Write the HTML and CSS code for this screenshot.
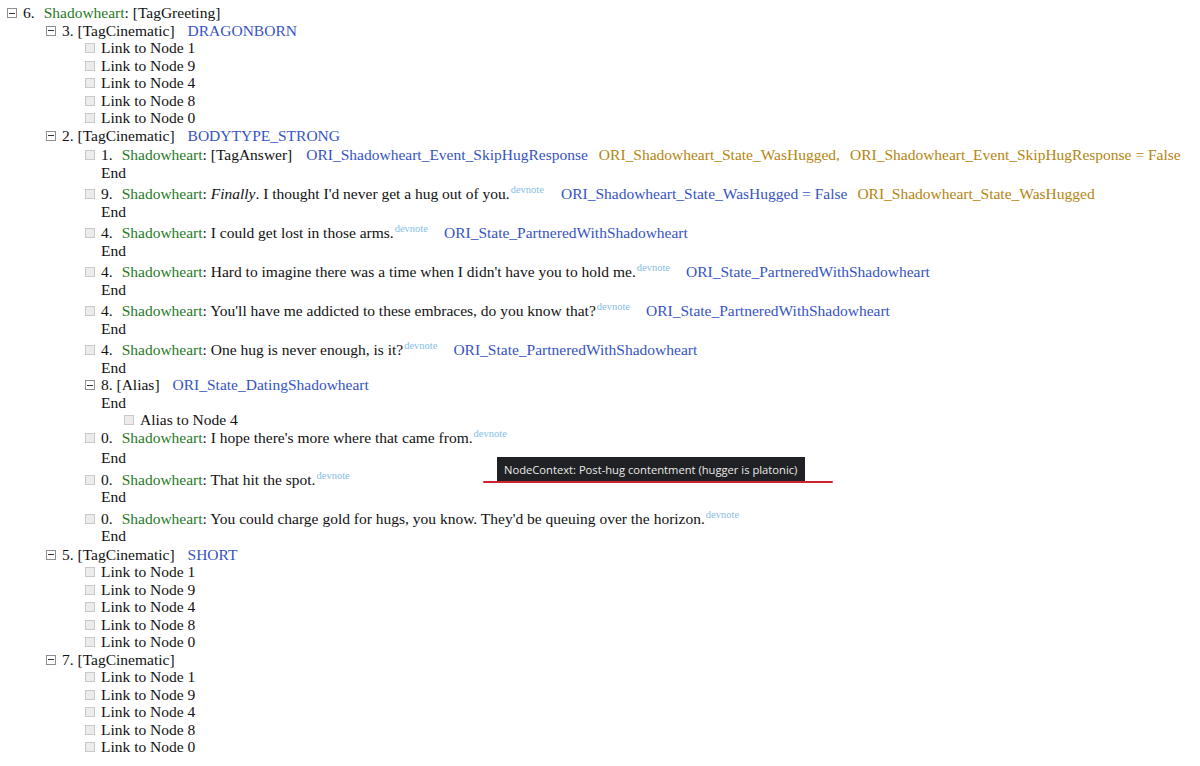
FILE: index.html
```html
<!DOCTYPE html>
<html>
<head>
<meta charset="utf-8">
<link rel="stylesheet" href="styles.css">
</head>
<body>
<div class="tree">
  <div class="node">
    <div class="row"><span class="ic minus"></span><div class="ct"><span class="num sp">6.</span><span class="spk">Shadowheart</span>: [TagGreeting]</div></div>
    <div class="children">

      <div class="node">
        <div class="row"><span class="ic minus"></span><div class="ct"><span class="num">3.</span> [TagCinematic]<span class="cb cond">DRAGONBORN</span></div></div>
        <div class="children">
          <div class="row"><span class="ic box"></span><div class="ct">Link to Node 1</div></div>
          <div class="row"><span class="ic box"></span><div class="ct">Link to Node 9</div></div>
          <div class="row"><span class="ic box"></span><div class="ct">Link to Node 4</div></div>
          <div class="row"><span class="ic box"></span><div class="ct">Link to Node 8</div></div>
          <div class="row"><span class="ic box"></span><div class="ct">Link to Node 0</div></div>
        </div>
      </div>

      <div class="node">
        <div class="row"><span class="ic minus"></span><div class="ct"><span class="num">2.</span> [TagCinematic]<span class="cb cond">BODYTYPE_STRONG</span></div></div>
        <div class="children first-gap">
          <div class="row dlg"><span class="ic box"></span><div class="ct"><div><span class="num sp">1.</span><span class="spk">Shadowheart</span>: [TagAnswer]<span class="cb cond w14">ORI_Shadowheart_Event_SkipHugResponse</span><span class="cg cond w11">ORI_Shadowheart_State_WasHugged,</span><span class="cg cond w10">ORI_Shadowheart_Event_SkipHugResponse = False</span></div><div>End</div></div></div>
          <div class="row dlg"><span class="ic box"></span><div class="ct"><div><span class="num sp">9.</span><span class="spk">Shadowheart</span>: <i>Finally</i>. I thought I'd never get a hug out of you.<sup class="dn">devnote</sup><span class="cb cond w17">ORI_Shadowheart_State_WasHugged = False</span><span class="cg cond w10">ORI_Shadowheart_State_WasHugged</span></div><div>End</div></div></div>
          <div class="row dlg"><span class="ic box"></span><div class="ct"><div><span class="num sp">4.</span><span class="spk">Shadowheart</span>: I could get lost in those arms.<sup class="dn">devnote</sup><span class="cb cond w16">ORI_State_PartneredWithShadowheart</span></div><div>End</div></div></div>
          <div class="row dlg"><span class="ic box"></span><div class="ct"><div><span class="num sp">4.</span><span class="spk">Shadowheart</span>: Hard to imagine there was a time when I didn't have you to hold me.<sup class="dn">devnote</sup><span class="cb cond w16">ORI_State_PartneredWithShadowheart</span></div><div>End</div></div></div>
          <div class="row dlg"><span class="ic box"></span><div class="ct"><div><span class="num sp">4.</span><span class="spk">Shadowheart</span>: You'll have me addicted to these embraces, do you know that?<sup class="dn">devnote</sup><span class="cb cond w16">ORI_State_PartneredWithShadowheart</span></div><div>End</div></div></div>
          <div class="row dlg tight"><span class="ic box"></span><div class="ct"><div><span class="num sp">4.</span><span class="spk">Shadowheart</span>: One hug is never enough, is it?<sup class="dn">devnote</sup><span class="cb cond w16">ORI_State_PartneredWithShadowheart</span></div><div>End</div></div></div>
          <div class="node">
            <div class="row"><span class="ic minus"></span><div class="ct"><div><span class="num">8.</span> [Alias]<span class="cb cond">ORI_State_DatingShadowheart</span></div><div>End</div></div></div>
            <div class="children">
              <div class="row"><span class="ic box"></span><div class="ct">Alias to Node 4</div></div>
            </div>
          </div>
          <div class="row dlg"><span class="ic box"></span><div class="ct"><div class="hovered"><span class="num sp">0.</span><span class="spk">Shadowheart</span>: I hope there's more where that came from.<sup class="dn">devnote</sup></div><div>End</div></div></div>
          <div class="row dlg"><span class="ic box"></span><div class="ct"><div><span class="num sp">0.</span><span class="spk">Shadowheart</span>: That hit the spot.<sup class="dn">devnote</sup></div><div>End</div></div></div>
          <div class="row dlg last"><span class="ic box"></span><div class="ct"><div><span class="num sp">0.</span><span class="spk">Shadowheart</span>: You could charge gold for hugs, you know. They'd be queuing over the horizon.<sup class="dn">devnote</sup></div><div>End</div></div></div>
        </div>
      </div>

      <div class="node">
        <div class="row"><span class="ic minus"></span><div class="ct"><span class="num">5.</span> [TagCinematic]<span class="cb cond">SHORT</span></div></div>
        <div class="children">
          <div class="row"><span class="ic box"></span><div class="ct">Link to Node 1</div></div>
          <div class="row"><span class="ic box"></span><div class="ct">Link to Node 9</div></div>
          <div class="row"><span class="ic box"></span><div class="ct">Link to Node 4</div></div>
          <div class="row"><span class="ic box"></span><div class="ct">Link to Node 8</div></div>
          <div class="row"><span class="ic box"></span><div class="ct">Link to Node 0</div></div>
        </div>
      </div>

      <div class="node">
        <div class="row"><span class="ic minus"></span><div class="ct"><span class="num">7.</span> [TagCinematic]</div></div>
        <div class="children">
          <div class="row"><span class="ic box"></span><div class="ct">Link to Node 1</div></div>
          <div class="row"><span class="ic box"></span><div class="ct">Link to Node 9</div></div>
          <div class="row"><span class="ic box"></span><div class="ct">Link to Node 4</div></div>
          <div class="row"><span class="ic box"></span><div class="ct">Link to Node 8</div></div>
          <div class="row"><span class="ic box"></span><div class="ct">Link to Node 0</div></div>
        </div>
      </div>

    </div>
  </div>
</div>
<div class="tooltip">NodeContext: Post-hug contentment (hugger is platonic)</div>
<div class="redline"></div>
</body>
</html>
```

FILE: styles.css
```css
html, body {
  margin: 0;
  padding: 0;
  background: #fff;
}
body {
  position: relative;
  font-family: "Liberation Serif", "Times New Roman", serif;
  font-size: 15.5px;
  line-height: 17.5px;
  color: #111;
  width: 1200px;
  height: 766px;
  overflow: hidden;
}
.tree {
  padding: 4px 0 0 7px;
}
.row {
  display: flex;
  align-items: flex-start;
  white-space: nowrap;
}
.ic {
  flex: none;
  width: 10px;
  height: 10px;
  margin-top: 4px;
  margin-right: 6px;
  box-sizing: border-box;
  position: relative;
}
.minus {
  width: 10px;
  height: 10px;
  border: 1px solid #8e8e8e;
  background: #fff;
}
.minus::after {
  content: "";
  position: absolute;
  left: 1px;
  right: 1px;
  top: 3.5px;
  height: 1px;
  background: #333;
}
.box {
  border: 1px solid #c9c9c9;
  background: #ececec;
}
.children {
  padding-left: 39px;
}
.first-gap {
  padding-top: 2px;
}
.dlg {
  margin-bottom: 4px;
}
.dlg.tight {
  margin-bottom: 0;
}
.dlg.last {
  margin-bottom: 1px;
}
.hovered {
  padding-bottom: 3px;
}
.num.sp {
  margin-right: 9px;
}
.spk {
  color: #1f7a1f;
}
.cond {
  margin-left: 13px;
}
.cond.w17 { margin-left: 17px; }
.cond.w16 { margin-left: 16px; }
.cond.w14 { margin-left: 14px; }
.cond.w11 { margin-left: 11px; }
.cond.w10 { margin-left: 10px; }
.cb {
  color: #3653c2;
}
.cg {
  color: #b5850f;
}
.dn {
  font-size: 10.5px;
  line-height: 0;
  color: #86bde6;
  vertical-align: 6px;
  margin-left: 1px;
}
.tooltip {
  position: absolute;
  left: 497px;
  top: 457px;
  width: 308px;
  height: 25px;
  box-sizing: border-box;
  background: #202124;
  color: #eaeaea;
  font-family: "Open Sans", "Noto Sans", sans-serif;
  font-size: 11.2px;
  line-height: 25px;
  padding-left: 7px;
  white-space: nowrap;
}
.redline {
  position: absolute;
  left: 483px;
  top: 481px;
  width: 350px;
  height: 2px;
  background: #cf2230;
  border-radius: 1px;
}
```
